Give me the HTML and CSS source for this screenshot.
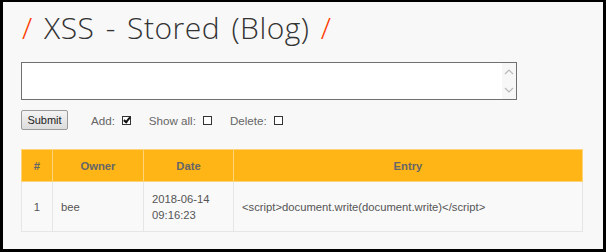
FILE: index.html
```html
<!DOCTYPE html>
<html lang="en">
    <head>
        <meta charset="utf-8" />
        <title>XSS - Stored (Blog)</title>
        <link rel="stylesheet" href="styles.css">
    </head>
    <body>
        <div id="frame">
            <h1 class="title"><span class="slash">/</span> XSS - Stored (Blog) <span class="slash">/</span></h1>

            <form id="blogForm" action="#" method="post">
                <div class="entryBox">
                    <textarea name="entry" id="entry" cols="80" rows="3"></textarea>
                    <!-- fake disabled scrollbar arrows -->
                    <svg class="scrollArrows" width="14" height="36" viewBox="0 0 14 36">
                        <polyline points="3,11 7,7 11,11" fill="none" stroke="#b8b8b8" stroke-width="1.2" />
                        <polyline points="3,25 7,29 11,25" fill="none" stroke="#b8b8b8" stroke-width="1.2" />
                    </svg>
                </div>
                <div class="controls">
                    <button type="submit" class="btnSubmit">Submit</button>
                    <label class="opt">Add: <input type="checkbox" name="add" checked /></label>
                    <label class="opt">Show all: <input type="checkbox" name="show_all" /></label>
                    <label class="opt">Delete: <input type="checkbox" name="delete" /></label>
                </div>
            </form>

            <table id="tblBlog">
                <tr class="head">
                    <th class="colId">#</th>
                    <th class="colOwner">Owner</th>
                    <th class="colDate">Date</th>
                    <th>Entry</th>
                </tr>
                <tr>
                    <td class="center">1</td>
                    <td>bee</td>
                    <td>2018-06-14<br>09:16:23</td>
                    <td>&lt;script&gt;document.write(document.write)&lt;/script&gt;</td>
                </tr>
            </table>
        </div>
    </body>
</html>
```

FILE: styles.css
```css
html, body {
    margin: 0;
    padding: 0;
}
body {
    background-color: #000;
}
#frame {
    box-sizing: border-box;
    margin: 2px 3px 3px 3px;
    height: 247px;
    padding: 0 0 0 18px;
    background-color: #f8f8f8;
    font-family: "Liberation Sans", Arial, sans-serif;
}
.title {
    margin: 0;
    padding: 8px 0 0 1px;
    height: 48px;
    box-sizing: border-box;
    font-family: "Open Sans", sans-serif;
    font-weight: 300;
    font-size: 30px;
    line-height: 36px;
    color: #333;
    letter-spacing: 0.5px;
    word-spacing: 3px;
}
.slash {
    color: #ff3b00;
}
.entryBox {
    position: relative;
    width: 496px;
    height: 38px;
    margin-top: 12px;
}
.entryBox textarea {
    box-sizing: border-box;
    width: 496px;
    height: 38px;
    margin: 0;
    border: 1px solid #707070;
    background-color: #fff;
    resize: none;
    overflow: hidden;
}
.scrollArrows {
    position: absolute;
    right: 1px;
    top: 1px;
    background-color: #f7f7f7;
}
.controls {
    display: flex;
    align-items: center;
    margin-top: 10px;
    height: 20px;
    font-size: 11.6px;
    color: #666;
}
.btnSubmit {
    box-sizing: border-box;
    width: 47px;
    height: 20px;
    padding: 0;
    margin: 0 23px 0 0;
    font-family: "Liberation Sans", Arial, sans-serif;
    font-size: 11px;
    color: #222;
    border: 1px solid #9a9a9a;
    border-radius: 2px;
    background: linear-gradient(#f4f4f4, #dcdcdc);
}
.opt {
    display: flex;
    align-items: center;
    margin-right: 18px;
}
.opt input {
    -webkit-appearance: none;
    appearance: none;
    position: relative;
    box-sizing: border-box;
    width: 9px;
    height: 9px;
    margin: 0 0 0 7px;
    border: 1px solid #333;
    background-color: #fff;
}
.opt input:checked::after {
    content: "";
    position: absolute;
    left: 2px;
    top: -1px;
    width: 2px;
    height: 5px;
    border-right: 2px solid #111;
    border-bottom: 2px solid #111;
    transform: rotate(40deg);
}
#tblBlog {
    margin-top: 19px;
    width: 562px;
    table-layout: fixed;
    border-collapse: collapse;
    font-size: 11.25px;
    color: #555;
}
#tblBlog th {
    height: 31px;
    padding: 0;
    background-color: #ffb516;
    color: #666;
    font-weight: bold;
    border: 1px solid #ffd37a;
}
#tblBlog td {
    height: 49px;
    padding: 0 8px;
    line-height: 16px;
    background-color: #f9f9f9;
    border: 1px solid #e6e6e6;
}
#tblBlog td.center {
    text-align: center;
}
.colId {
    width: 30px;
}
.colOwner {
    width: 90px;
}
.colDate {
    width: 89px;
}
```
